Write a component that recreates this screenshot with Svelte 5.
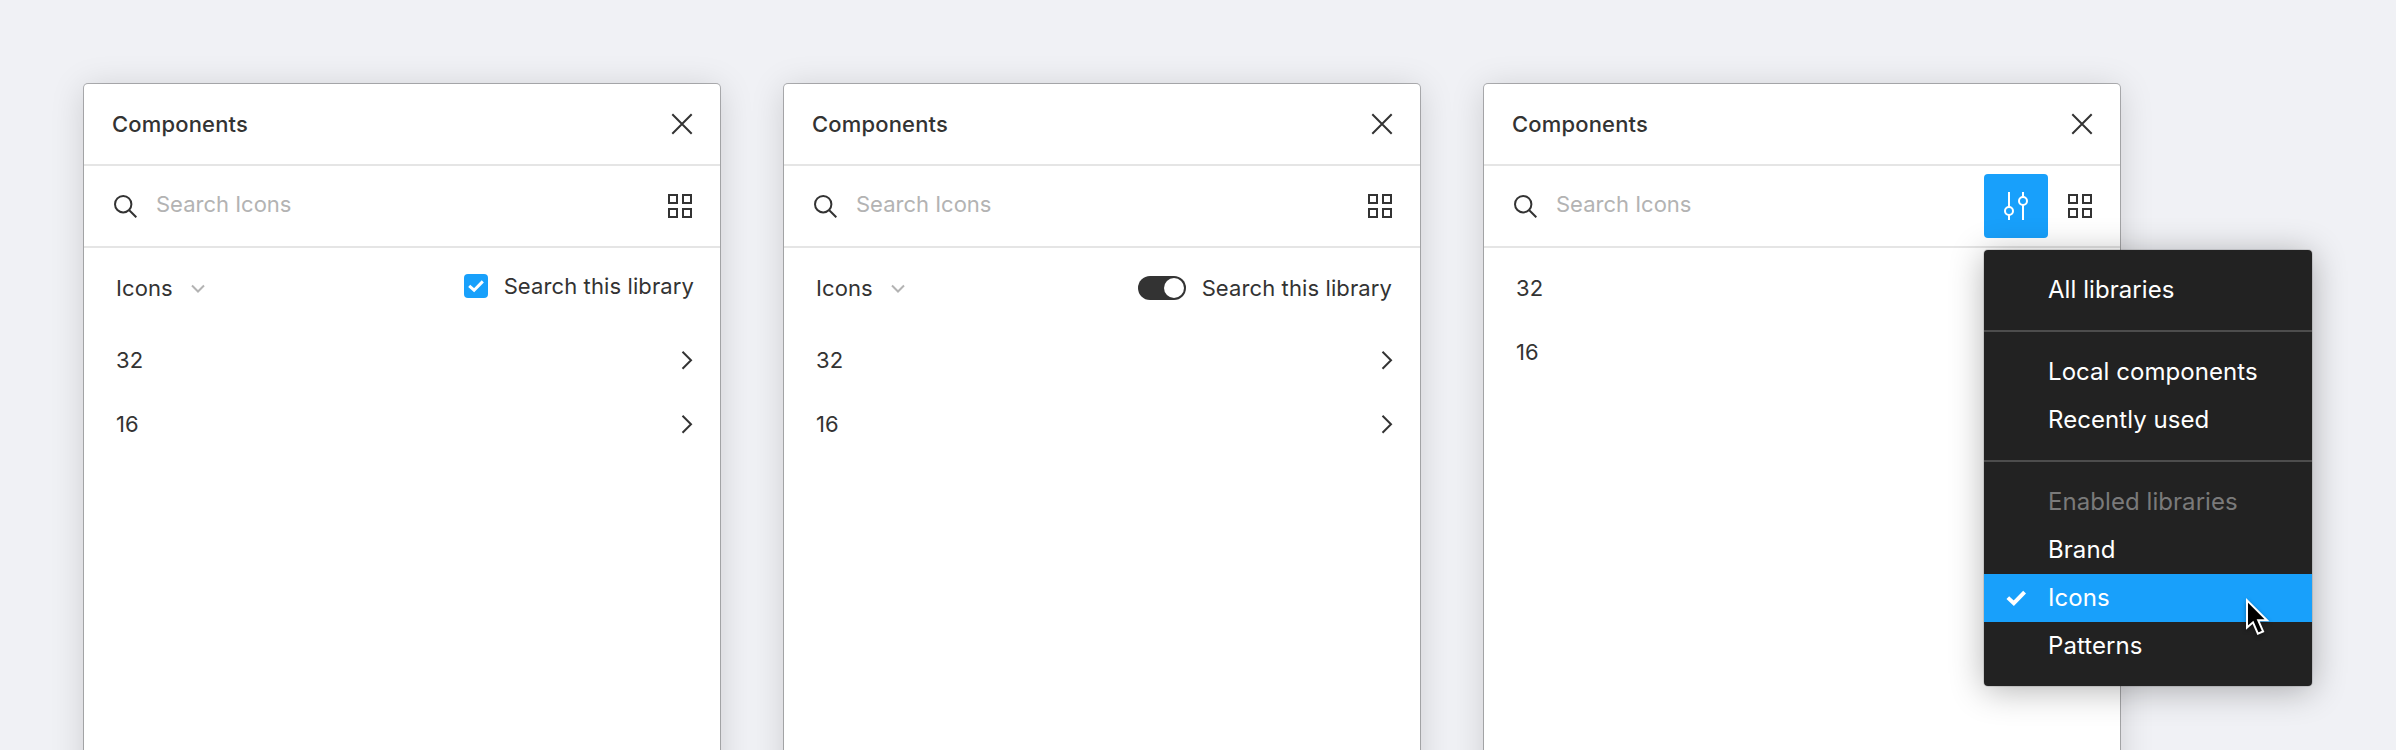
<script>
  const panels = [
    { kind: 'checkbox', rows: ['32', '16'] },
    { kind: 'toggle', rows: ['32', '16'] },
    { kind: 'menu', rows: ['32', '16'] }
  ];
  const groups = [
    [{ label: 'All libraries' }],
    [{ label: 'Local components' }, { label: 'Recently used' }],
    [
      { label: 'Enabled libraries', muted: true },
      { label: 'Brand' },
      { label: 'Icons', active: true },
      { label: 'Patterns' }
    ]
  ];
</script>

<main>
  {#each panels as panel}
    <section class="panel">
      <header class="bar">
        <h2>Components</h2>
        <svg class="close" width="22" height="22" viewBox="0 0 22 22"><path d="M1.3 1.3 20.7 20.7M20.7 1.3 1.3 20.7" /></svg>
      </header>
      <div class="bar search">
        <svg width="24" height="24" viewBox="0 0 24 24"><circle cx="9.2" cy="10.2" r="8.2" /><path d="M15 16 22.3 23.3" /></svg>
        <span class="placeholder">Search Icons</span>
        {#if panel.kind === 'menu'}
          <button class="filter" aria-label="Filter">
            <svg width="24" height="28" viewBox="0 0 24 28"><path d="M5 0V15M5 23V28M19 0V5M19 13V28" /><circle cx="5" cy="19" r="4" /><circle cx="19" cy="9" r="4" /></svg>
            <div class="menu">
              {#each groups as group}
                <div class="group">
                  {#each group as item}
                    <div class="item" class:muted={item.muted} class:active={item.active}>
                      {#if item.active}
                        <svg class="tick" width="20" height="16" viewBox="0 0 20 16"><path d="M1.8 7.6 7.8 13.1 18.6 2.1" /></svg>
                      {/if}
                      <span>{item.label}</span>
                      {#if item.active}
                        <svg class="cursor" width="26" height="40" viewBox="0 0 26 40"><path d="M1 2.3V29.5L7 24.3 11.9 35.6 17.1 33.4 12.2 22.3H21Z" /></svg>
                      {/if}
                    </div>
                  {/each}
                </div>
              {/each}
            </div>
          </button>
        {/if}
        <svg class="grid" width="24" height="24" viewBox="0 0 24 24"><path d="M1 1H9V9H1ZM15 1H23V9H15ZM1 15H9V23H1ZM15 15H23V23H15Z" /></svg>
      </div>
      {#if panel.kind !== 'menu'}
        <div class="library">
          <span>Icons</span>
          <svg class="down" width="14" height="10" viewBox="0 0 14 10"><path d="M1 1.5 7 7.5 13 1.5" /></svg>
          <div class="option {panel.kind}">
            {#if panel.kind === 'checkbox'}
              <i class="box"><svg width="16" height="13" viewBox="0 0 16 13"><path d="M1.2 5.8 6.1 10.2 14.8 1.4" /></svg></i>
            {:else}
              <i class="switch"></i>
            {/if}
            <span>Search this library</span>
          </div>
        </div>
      {/if}
      <div class="rows" class:inset={panel.kind === 'menu'}>
        {#each panel.rows as row}
          <div class="row">
            <span>{row}</span>
            {#if panel.kind !== 'menu'}
              <svg width="12" height="20" viewBox="0 0 12 20"><path d="M1.5 1.8 10 10.3 1.5 18.8" /></svg>
            {/if}
          </div>
        {/each}
      </div>
    </section>
  {/each}
</main>

<style>
  :global(body) { background: #f0f1f5; overflow: hidden; }
  main {
    box-sizing: border-box;
    width: 2396px;
    height: 750px;
    padding: 84px 0 0 84px;
    display: flex;
    gap: 64px;
    overflow: hidden;
    background: #f0f1f5;
    color: #333;
    font: 400 22px/32px Inter, sans-serif;
    letter-spacing: 0.11px;
    white-space: nowrap;
  }
  svg { display: block; flex: none; fill: none; stroke: #333; stroke-width: 2; }
  .panel {
    width: 636px;
    height: 800px;
    flex: none;
    background: #fff;
    border-radius: 4px;
    box-shadow: 0 0 0 1px rgba(0, 0, 0, 0.27), 0 4px 34px rgba(0, 0, 0, 0.15);
  }
  .bar {
    box-sizing: border-box;
    height: 82px;
    padding: 0 28px;
    display: flex;
    align-items: center;
    border-bottom: 2px solid #e5e5e5;
  }
  h2 { margin: 0; font-size: 22px; font-weight: 500; letter-spacing: 0.16px; }
  .close { margin-left: auto; margin-right: -1px; }
  .search > svg:first-child { margin-left: 2px; }
  .placeholder { flex: 1; margin-left: 18px; padding-bottom: 4px; color: #b3b3b3; letter-spacing: 0; }
  .filter {
    position: relative;
    width: 64px;
    height: 64px;
    margin-right: 20px;
    padding: 0;
    border: 0;
    border-radius: 4px;
    background: #18a0fb;
    display: flex;
    align-items: center;
    justify-content: center;
    font: inherit;
  }
  .filter > svg { stroke: #fff; }
  .menu {
    position: absolute;
    top: 76px;
    left: 0;
    width: 328px;
    border-radius: 4px;
    background: #222;
    color: #fff;
    font-size: 24px;
    text-align: left;
    letter-spacing: 0.06px;
    box-shadow: 0 0 0 1px rgba(0, 0, 0, 0.1), 0 4px 34px rgba(0, 0, 0, 0.3);
  }
  .group { padding: 16px 0; }
  .group + .group { border-top: 2px solid #4d4d4d; }
  .item { position: relative; height: 48px; padding-left: 64px; display: flex; align-items: center; }
  .muted { color: #7a7a7a; }
  .active { background: #18a0fb; }
  .tick { margin: 0 22px 0 -42px; stroke: #fff; stroke-width: 4; }
  .cursor {
    position: absolute;
    z-index: 1;
    left: 262px;
    top: 24px;
    overflow: visible;
    fill: #000;
    stroke: #fff;
    filter: drop-shadow(0 2px 2px rgba(0, 0, 0, 0.35));
  }
  .library { height: 80px; padding: 0 26px 0 32px; display: flex; align-items: center; }
  .down { margin-left: 18px; margin-top: 2px; stroke: #b3b3b3; }
  .option { margin-left: auto; display: flex; align-items: center; gap: 16px; }
  .checkbox { padding-bottom: 4px; }
  .toggle { margin-right: 2px; }
  .box {
    width: 24px;
    height: 24px;
    border-radius: 4px;
    background: #18a0fb;
    display: flex;
    align-items: center;
    justify-content: center;
  }
  .box svg { stroke: #fff; stroke-width: 3; }
  .switch {
    box-sizing: border-box;
    width: 48px;
    height: 24px;
    padding: 2px;
    border-radius: 12px;
    background: #333;
    display: flex;
    justify-content: flex-end;
  }
  .switch::after { content: ''; width: 20px; height: 20px; border-radius: 50%; background: #fff; }
  .row { height: 64px; padding: 0 27px 0 32px; display: flex; align-items: center; justify-content: space-between; }
  .inset { padding-top: 8px; }
</style>
